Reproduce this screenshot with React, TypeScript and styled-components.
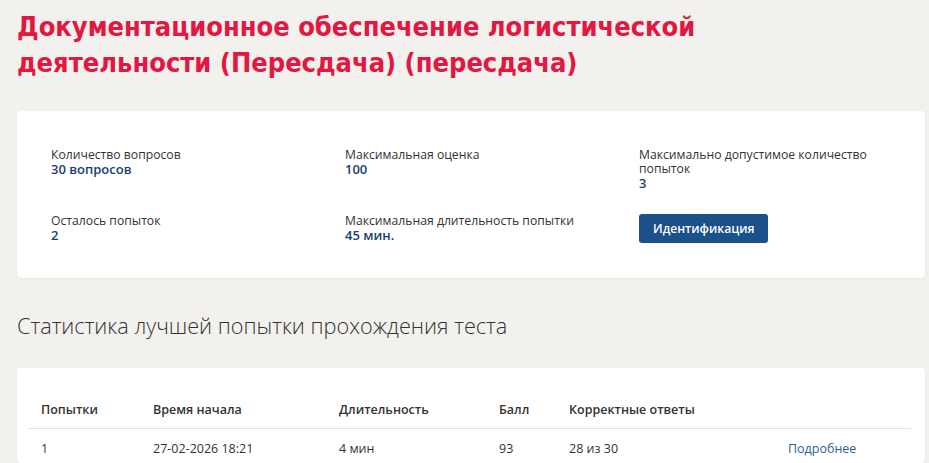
import * as React from 'react'
import styled, { createGlobalStyle } from 'styled-components'

const GlobalStyle = createGlobalStyle`
    html, body {
        margin: 0;
        padding: 0;
        background: #f2f1ee;
        font-family: "Open Sans", "Noto Sans", sans-serif;
        color: #333;
    }
`

interface Info {
    label: string,
    value: string
}

const infoRows: Info[][] = [
    [
        { label: 'Количество вопросов', value: '30 вопросов' },
        { label: 'Максимальная оценка', value: '100' },
        { label: 'Максимально допустимое количество попыток', value: '3' },
    ],
    [
        { label: 'Осталось попыток', value: '2' },
        { label: 'Максимальная длительность попытки', value: '45 мин.' },
    ],
]

const columns: string[] = ['Попытки', 'Время начала', 'Длительность', 'Балл', 'Корректные ответы', '']
// widths include the 13px left padding of each cell
const widths: string[] = ['112px', '186px', '160px', '70px', '219px', 'auto']

const attempts = [
    { n: '1', start: '27-02-2026 18:21', duration: '4 мин', score: '93', correct: '28 из 30' },
]

const Page = styled.div`
    padding: 9px 4px 0 17px;
`

const Title = styled.h1`
    margin: 0;
    width: 700px;
    font-family: "DejaVu Sans", sans-serif;
    font-stretch: condensed;
    font-weight: 700;
    font-size: 27px;
    line-height: 36px;
    color: #e3173f;
`

const Card = styled.div<{ $top: number }>`
    margin-top: ${p => p.$top}px;
    background: #fff;
    border-radius: 4px;
    box-shadow: 0 1px 2px rgba(0, 0, 0, 0.05);
`

const InfoGrid = styled.div`
    display: grid;
    grid-template-columns: 294px 294px 250px;
    grid-template-rows: 60px 29px;
    row-gap: 6px;
    padding: 37px 34px 35px 34px;
`

const InfoCell = styled.div`
    display: flex;
    flex-direction: column;
`

const Label = styled.span`
    width: 235px;
    font-size: 12.2px;
    line-height: 14px;
    color: #333;
`

const Value = styled.span`
    font-size: 13px;
    line-height: 14px;
    font-weight: 600;
    color: #1c3d6e;
`

const IdButton = styled.button`
    align-self: flex-start;
    height: 29px;
    padding: 0 14px;
    border: none;
    border-radius: 3px;
    background: #1b5088;
    color: #fff;
    font-family: "Open Sans", sans-serif;
    font-weight: 600;
    font-size: 12.2px;
    cursor: pointer;
`

const SectionTitle = styled.h2`
    margin: 33px 0 0 0;
    font-weight: 300;
    font-size: 21.7px;
    line-height: 30px;
    color: #333;
`

const TableWrap = styled.div`
    padding: 33px 0 6px 0;
`

const Table = styled.table`
    width: calc(100% - 25px);
    margin-left: 11px;
    border-collapse: collapse;
    table-layout: fixed;
`

const Th = styled.th<{ $w: string }>`
    box-sizing: border-box;
    width: ${p => p.$w};
    text-align: left;
    padding: 0 0 10px 13px;
    font-size: 12.5px;
    font-weight: 600;
    color: #333;
    border-bottom: 1px solid #e3e3e3;
`

const Td = styled.td`
    padding: 11px 0 0 13px;
    font-size: 12.5px;
    color: #333;
`

const MoreLink = styled.a`
    color: #2d5f93;
    text-decoration: none;
    font-size: 12.5px;
`

const InfoItem: React.FunctionComponent<{ info: Info }> = ({ info }) => (
    <InfoCell>
        <Label>{info.label}</Label>
        <Value>{info.value}</Value>
    </InfoCell>
)

const App: React.FunctionComponent = (): React.ReactElement => {
    return (
        <Page>
            <GlobalStyle />
            <Title>Документационное обеспечение логистической деятельности (Пересдача) (пересдача)</Title>

            <Card $top={30}>
                <InfoGrid>
                    {infoRows[0].map((info: Info, i: number) => <InfoItem key={`r0${i}`} info={info} />)}
                    {infoRows[1].map((info: Info, i: number) => <InfoItem key={`r1${i}`} info={info} />)}
                    <InfoCell>
                        <IdButton>Идентификация</IdButton>
                    </InfoCell>
                </InfoGrid>
            </Card>

            <SectionTitle>Статистика лучшей попытки прохождения теста</SectionTitle>

            <Card $top={27}>
                <TableWrap>
                    <Table>
                        <thead>
                            <tr>
                                {columns.map((c: string, i: number) => <Th key={i.toString()} $w={widths[i]}>{c}</Th>)}
                            </tr>
                        </thead>
                        <tbody>
                            {attempts.map(a => (
                                <tr key={a.n}>
                                    <Td>{a.n}</Td>
                                    <Td>{a.start}</Td>
                                    <Td>{a.duration}</Td>
                                    <Td>{a.score}</Td>
                                    <Td>{a.correct}</Td>
                                    <Td><MoreLink href="#">Подробнее</MoreLink></Td>
                                </tr>
                            ))}
                        </tbody>
                    </Table>
                </TableWrap>
            </Card>
        </Page>
    )
}

export default App
